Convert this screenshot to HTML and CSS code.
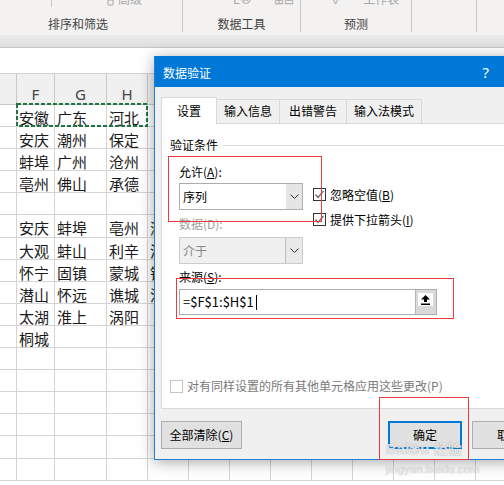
FILE: index.html
```html
<!DOCTYPE html>
<html>
<head>
<meta charset="utf-8">
<title>数据验证</title>
<link rel="stylesheet" href="styles.css">
</head>
<body>
<div class="ribbon">
  <div class="grp g1">
    <div class="tools"><i class="vsep"></i><span class="tool t-adv"><svg class="ticon" width="10" height="14" viewBox="0 0 10 14"><path d="M1 1h8v5H1zM3 8h5v5H3z" fill="none" stroke="#a8a8a8" stroke-width="1"/></svg>高级</span></div>
    <div class="glabel">排序和筛选</div>
  </div>
  <div class="grp g2">
    <div class="tools"><span class="tool t-e">E⊗</span><span class="tool t-f">⊞⊟</span></div>
    <div class="glabel">数据工具</div>
  </div>
  <div class="grp g3">
    <div class="tools"><span class="tool t-chk">✓</span><span class="tool t-ws">工作表</span></div>
    <div class="glabel">预测</div>
  </div>
  <div class="grp g4"></div>
  <div class="grp g5"></div>
</div>
<div class="band"></div>
<div class="fbar"></div>

<div class="sheet">
  <div class="hd"></div><div class="hd">F</div><div class="hd">G</div><div class="hd">H</div><div class="hd"></div><div class="hd"></div><div class="hd"></div><div class="hd"></div><div class="hd"></div><div class="hd"></div><div class="hd"></div><div class="hd"></div><div class="hd"></div>
  <div></div><div>安徽</div><div>广东</div><div>河北</div><div></div><div></div><div></div><div></div><div></div><div></div><div></div><div></div><div></div>
  <div></div><div>安庆</div><div>潮州</div><div>保定</div><div></div><div></div><div></div><div></div><div></div><div></div><div></div><div></div><div></div>
  <div></div><div>蚌埠</div><div>广州</div><div>沧州</div><div></div><div></div><div></div><div></div><div></div><div></div><div></div><div></div><div></div>
  <div></div><div>亳州</div><div>佛山</div><div>承德</div><div></div><div></div><div></div><div></div><div></div><div></div><div></div><div></div><div></div>
  <div></div><div></div><div></div><div></div><div></div><div></div><div></div><div></div><div></div><div></div><div></div><div></div><div></div>
  <div></div><div>安庆</div><div>蚌埠</div><div>亳州</div><div>滁州</div><div></div><div></div><div></div><div></div><div></div><div></div><div></div><div></div>
  <div></div><div>大观</div><div>蚌山</div><div>利辛</div><div>淮南</div><div></div><div></div><div></div><div></div><div></div><div></div><div></div><div></div>
  <div></div><div>怀宁</div><div>固镇</div><div>蒙城</div><div>铜官</div><div></div><div></div><div></div><div></div><div></div><div></div><div></div><div></div>
  <div></div><div>潜山</div><div>怀远</div><div>谯城</div><div>潘集</div><div></div><div></div><div></div><div></div><div></div><div></div><div></div><div></div>
  <div></div><div>太湖</div><div>淮上</div><div>涡阳</div><div></div><div></div><div></div><div></div><div></div><div></div><div></div><div></div><div></div>
  <div></div><div>桐城</div><div></div><div></div><div></div><div></div><div></div><div></div><div></div><div></div><div></div><div></div><div></div>
  <div></div><div></div><div></div><div></div><div></div><div></div><div></div><div></div><div></div><div></div><div></div><div></div><div></div>
  <div></div><div></div><div></div><div></div><div></div><div></div><div></div><div></div><div></div><div></div><div></div><div></div><div></div>
  <div></div><div></div><div></div><div></div><div></div><div></div><div></div><div></div><div></div><div></div><div></div><div></div><div></div>
  <div></div><div></div><div></div><div></div><div></div><div></div><div></div><div></div><div></div><div></div><div></div><div></div><div></div>
  <div></div><div></div><div></div><div></div><div></div><div></div><div></div><div></div><div></div><div></div><div></div><div></div><div></div>
  <div></div><div></div><div></div><div></div><div></div><div></div><div></div><div></div><div></div><div></div><div></div><div></div><div></div>
</div>

<svg class="marquee" width="132" height="24" viewBox="0 0 132 24"><rect x="1" y="1" width="130" height="22" fill="none" stroke="#217346" stroke-width="2" stroke-dasharray="4 2"/></svg>

<div class="dlg">
  <div class="tbar"><span class="ttl">数据验证</span><span class="help">?</span></div>
  <div class="dbody">
    <div class="tabs">
      <div class="tab on">设置</div>
      <div class="tab w2">输入信息</div>
      <div class="tab w3">出错警告</div>
      <div class="tab w4">输入法模式</div>
    </div>
    <div class="panel">
      <div class="gtitle"><span>验证条件</span><i class="rule"></i></div>
      <div class="inner">
        <div class="cond">
          <div class="lcol">
            <div class="lbl">允许(<u>A</u>):</div>
            <div class="combo"><span class="val">序列</span><span class="drop"><svg width="9" height="5" viewBox="0 0 9 5"><polyline points="0.5,0.5 4.5,4.5 8.5,0.5" fill="none" stroke="#333" stroke-width="1"/></svg></span></div>
            <div class="lbl dim">数据(D):</div>
            <div class="combo off"><span class="val">介于</span><span class="drop"><svg width="9" height="5" viewBox="0 0 9 5"><polyline points="0.5,0.5 4.5,4.5 8.5,0.5" fill="none" stroke="#333" stroke-width="1"/></svg></span></div>
          </div>
          <div class="checks">
            <div class="chk"><span class="box"><svg width="11" height="11" viewBox="0 0 11 11"><polyline points="1.5,5.5 4,8.5 9.5,2" fill="none" stroke="#666" stroke-width="1.3"/></svg></span><span class="ctext">忽略空值(<u>B</u>)</span></div>
            <div class="chk"><span class="box"><svg width="11" height="11" viewBox="0 0 11 11"><polyline points="1.5,5.5 4,8.5 9.5,2" fill="none" stroke="#666" stroke-width="1.3"/></svg></span><span class="ctext">提供下拉箭头(<u>I</u>)</span></div>
          </div>
        </div>
        <div class="lbl src">来源(<u>S</u>):</div>
        <div class="input"><span class="txt">=$F$1:$H$1<i class="caret"></i></span><span class="ref"><span class="sq"><svg width="9" height="10" viewBox="0 0 9 10"><path d="M4.5 0L0 4.5h3V7h3V4.5h3z M0 8.5h9V10H0z" fill="#000"/></svg></span></span></div>
      </div>
      <div class="apply"><span class="box off"></span><span class="ctext">对有同样设置的所有其他单元格应用这些更改(P)</span></div>
    </div>
    <div class="btns">
      <div class="btn clr">全部清除(<u>C</u>)</div>
      <div class="btn ok">确定</div>
      <div class="btn cancel">取消</div>
    </div>
  </div>
</div>

<div class="mark m1"></div>
<div class="mark m2"></div>
<div class="mark m3"></div>

<div class="wm">
  <div class="wm1">Bai<span class="paw">❀</span>u <span class="wmcn">经验</span></div>
  <div class="wm2">jingyan.baidu.com</div>
</div>
</body>
</html>
```
FILE: styles.css
```css
html, body {
  margin: 0;
  padding: 0;
  overflow: hidden;
}
body {
  width: 504px;
  height: 485px;
  position: relative;
  background: #fff;
  font-family: "Noto Sans CJK SC", "Noto Sans", sans-serif;
  color: #000;
}

/* ribbon */
.ribbon {
  height: 35px;
  background: #f3f2f1;
  display: flex;
}
.grp {
  height: 32px;
  box-sizing: border-box;
  border-right: 1px solid #c8c8c8;
  display: flex;
  flex-direction: column;
  flex-shrink: 0;
}
.g1 { width: 183px; }
.g2 { width: 118px; }
.g3 { width: 111px; }
.g4 { width: 65px; }
.g5 { width: 40px; }
.tools {
  height: 9px;
  overflow: hidden;
  display: flex;
  align-items: flex-end;
}
.tool {
  font-size: 12px;
  line-height: 16px;
  color: #a8a8a8;
  white-space: nowrap;
  display: flex;
  align-items: center;
}
.ticon { margin-right: 3px; }
.vsep {
  display: block;
  width: 1px;
  height: 9px;
  background: #c8c8c8;
  margin-left: 51px;
}
.t-adv { margin-left: 53px; }
.t-e { margin-left: 50px; }
.t-f { margin-left: 22px; }
.t-chk { margin-left: 32px; }
.t-ws { margin-left: 22px; }
.glabel {
  margin-top: 9px;
  font-size: 12px;
  line-height: 16px;
  color: #444;
  text-align: center;
  white-space: nowrap;
}
.g1 .glabel { text-align: left; padding-left: 48px; }

.band {
  height: 13px;
  box-sizing: border-box;
  background: linear-gradient(#ebebeb, #dedede);
  border-bottom: 1px solid #c6c6c6;
}
.fbar {
  height: 26px;
  box-sizing: border-box;
  border-bottom: 1px solid #d4d4d4;
  background: #fff;
}

/* sheet */
.sheet {
  display: grid;
  grid-template-columns: 17px 38px 52px 41px repeat(9, 41px);
  grid-template-rows: 31px;
  grid-auto-rows: 22.1px;
}
.sheet > div {
  box-sizing: border-box;
  border-right: 1px solid #d4d4d4;
  border-bottom: 1px solid #d4d4d4;
  font-size: 15px;
  line-height: 20px;
  padding: 3px 0 0 2px;
  overflow: hidden;
  white-space: nowrap;
  color: #1a1a1a;
}
.sheet > .hd {
  background: #f0f0f0;
  border-right-color: #c8c8c8;
  border-bottom-color: #c8c8c8;
  font-family: "Noto Sans", sans-serif;
  color: #444;
  text-align: center;
  line-height: 18px;
  padding: 11px 0 0 0;
}
.marquee {
  position: absolute;
  left: 16px;
  top: 103px;
}

/* dialog */
.dlg {
  position: absolute;
  left: 154px;
  top: 56px;
  width: 362px;
  height: 404px;
  box-sizing: border-box;
  border: 1px solid #1b80d6;
  border-top-color: #0078d7;
  background: #f0f0f0;
  box-shadow: 0 2px 14px rgba(0, 0, 0, 0.35);
  overflow: hidden;
}
.tbar {
  height: 30px;
  background: #0078d7;
  color: #fff;
  display: flex;
  align-items: center;
  justify-content: space-between;
  padding: 0 26px 0 8px;
  font-size: 12px;
}
.help {
  font-family: "Noto Sans", sans-serif;
  font-size: 15px;
}
.dbody {
  padding: 10px 6px 0 6px;
}
.tabs {
  display: flex;
  align-items: flex-end;
  height: 26px;
  position: relative;
  z-index: 1;
}
.tab {
  box-sizing: border-box;
  height: 24px;
  border-top: 1px solid #d9d9d9;
  border-right: 1px solid #d9d9d9;
  background: #f0f0f0;
  font-size: 12px;
  line-height: 22px;
  text-align: center;
  color: #000;
  flex-shrink: 0;
}
.tab.on {
  width: 56px;
  height: 27px;
  margin-bottom: -1px;
  border-left: 1px solid #d9d9d9;
  background: #fff;
  line-height: 25px;
}
.w2 { width: 63px; }
.w3 { width: 67px; }
.w4 { width: 75px; }
.panel {
  height: 286px;
  box-sizing: border-box;
  border: 1px solid #d9d9d9;
  background: #fff;
  padding-left: 8px;
}
.gtitle {
  padding-top: 13px;
  display: flex;
  align-items: center;
  font-size: 12px;
  line-height: 16px;
}
.rule {
  flex: 1;
  height: 1px;
  background: #dcdcdc;
  margin-left: 5px;
}
.inner { margin-left: 9px; }
.cond {
  margin-top: 11px;
  display: flex;
}
.lcol { width: 124px; }
.lbl {
  font-size: 12px;
  line-height: 16px;
}
.lbl.dim {
  margin-top: 6px;
  color: #a0a0a0;
}
.combo {
  margin-top: 3px;
  height: 27px;
  box-sizing: border-box;
  border: 1px solid #adadad;
  display: flex;
  background: #fff;
}
.combo .val {
  flex: 1;
  padding-left: 3px;
  font-size: 12px;
  line-height: 25px;
}
.drop {
  width: 16px;
  background: #e5e5e5;
  display: flex;
  align-items: center;
  justify-content: center;
}
.combo.off {
  margin-top: 5px;
  border-color: #cccccc;
  background: #f0f0f0;
}
.combo.off .val { color: #8a8a8a; }
.combo.off .drop {
  background: #e9e9e9;
  border-left: 1px solid #bdbdbd;
}
.checks {
  margin-left: 10px;
  padding-top: 24px;
  display: flex;
  flex-direction: column;
  gap: 12px;
}
.chk {
  display: flex;
  align-items: center;
  height: 13px;
  white-space: nowrap;
}
.box {
  width: 13px;
  height: 13px;
  box-sizing: border-box;
  border: 1px solid #333;
  background: #fff;
  display: flex;
  align-items: center;
  justify-content: center;
  flex-shrink: 0;
}
.box.off { border-color: #c4c4c4; }
.ctext {
  margin-left: 4px;
  font-size: 12px;
  line-height: 16px;
}
.lbl.src { margin-top: 5px; }
.input {
  margin-top: 4px;
  width: 258px;
  height: 26px;
  box-sizing: border-box;
  border: 1px solid #adadad;
  display: flex;
}
.txt {
  flex: 1;
  padding-left: 3px;
  font-size: 13px;
  line-height: 24px;
  display: flex;
  align-items: center;
}
.caret {
  display: inline-block;
  width: 1px;
  height: 15px;
  background: #000;
  margin-left: 2px;
}
.ref {
  width: 21px;
  box-sizing: border-box;
  border-left: 1px solid #b4b4b4;
  background: #d9d9d9;
  padding: 3px 0 0 2px;
}
.sq {
  width: 15px;
  height: 13px;
  background: #fff;
  display: flex;
  align-items: center;
  justify-content: center;
}
.apply {
  margin-top: 63px;
  display: flex;
  align-items: center;
  height: 16px;
}
.apply .ctext { color: #7a7a7a; white-space: nowrap; }
.btns {
  margin-top: 12px;
  display: flex;
}
.btn {
  height: 28px;
  box-sizing: border-box;
  border: 1px solid #adadad;
  background: #e1e1e1;
  font-size: 12px;
  line-height: 26px;
  text-align: center;
  flex-shrink: 0;
  white-space: nowrap;
}
.clr { width: 81px; }
.ok {
  width: 74px;
  margin-left: 146px;
  border: 2px solid #0078d7;
  line-height: 24px;
}
.cancel {
  width: 74px;
  margin-left: 10px;
}

/* annotation boxes */
.mark {
  position: absolute;
  border: 1px solid #ec3a3f;
  box-sizing: border-box;
}
.m1 { left: 168px; top: 156px; width: 154px; height: 66px; }
.m2 { left: 176px; top: 278px; width: 278px; height: 41px; }
.m3 { left: 379px; top: 397px; width: 90px; height: 63px; }

/* watermark */
.wm {
  position: absolute;
  left: 386px;
  top: 440px;
  color: rgba(255, 255, 255, 0.75);
  text-shadow: 0 0 1px rgba(110, 110, 110, 0.7);
  font-family: "Liberation Sans", sans-serif;
}
.wm1 {
  font-size: 15px;
  font-weight: bold;
  line-height: 16px;
  white-space: nowrap;
}
.paw { font-size: 13px; }
.wmcn { font-family: "Noto Sans CJK SC", sans-serif; font-size: 14px; }
.wm2 {
  font-size: 11px;
  line-height: 14px;
  margin-top: 4px;
  letter-spacing: 0.3px;
}
```
